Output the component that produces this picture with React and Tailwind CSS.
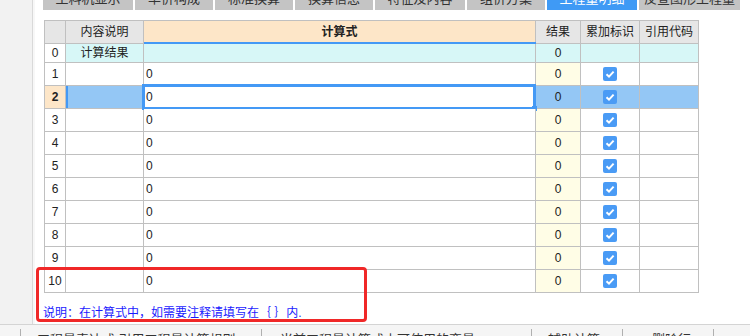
import React from 'react';

const FONT = "font-['Liberation_Sans','Noto_Sans_CJK_SC',sans-serif]";

const TABS = [
  { label: '工料机显示', w: 'w-[90px]' },
  { label: '单价构成', w: 'w-[78px]' },
  { label: '标准换算', w: 'w-[78px]' },
  { label: '换算信息', w: 'w-[78px]' },
  { label: '特征及内容', w: 'w-[90px]' },
  { label: '组价方案', w: 'w-[78px]' },
  { label: '工程量明细', w: 'w-[90px]', active: true },
  { label: '反查图形工程量', w: 'w-[101px]' },
];

const cell = 'border-r border-b border-[#c0c0c0] flex items-center shrink-0';

const Check = () => (
  <span className="w-[14px] h-[14px] rounded-[2px] bg-[#4a9bf5] flex items-center justify-center">
    <svg width="14" height="14" viewBox="0 0 14 14">
      <path d="M3.5 7.2 L6 9.6 L10.6 4.6" fill="none" stroke="#fff" strokeWidth="2" />
    </svg>
  </span>
);

const Row = ({ n }) => {
  const sel = n === 2;
  return (
    <div className="flex h-[23px]">
      <div className={`${cell} w-[21px] justify-center ${sel ? 'bg-[#fde6c8] font-bold' : 'bg-white'}`}>{n}</div>
      <div className={`${cell} w-[78px] ${sel ? 'bg-[#94c7f5] shadow-[inset_2px_0_0_#4499f5]' : 'bg-white'}`} />
      <div className={`${cell} w-[392px] pl-[2px] bg-white relative`}>
        0
        {sel && (
          <div className="absolute left-[-2px] top-[-2px] right-[-1px] bottom-[-2px] border-[3px] border-[#4499f5]">
            <div className="absolute right-[-4px] bottom-[-4px] w-[5px] h-[5px] bg-[#4499f5]" />
          </div>
        )}
      </div>
      <div className={`${cell} w-[45px] justify-center ${sel ? 'bg-[#94c7f5]' : 'bg-[#fffde6]'}`}>0</div>
      <div className={`${cell} w-[59px] justify-center ${sel ? 'bg-[#94c7f5]' : 'bg-white'}`}>
        <Check />
      </div>
      <div className={`${cell} w-[59px] ${sel ? 'bg-[#94c7f5]' : 'bg-white'}`} />
    </div>
  );
};

export default function App() {
  return (
    <div className={`w-[750px] h-[336px] overflow-hidden relative bg-white text-[12px] text-[#222] ${FONT}`}>
      <div className="flex h-[324px]">
        {/* left gutter */}
        <div className="w-[33px] bg-[#f2f2f2] border-r border-[#d9d9d9]" />
        <div className="w-[2px] bg-[#f7f7f7]" />

        <div className="flex-1 flex flex-col">
          {/* tabs, cut at top */}
          <div className="h-[10px] overflow-hidden relative">
            <div className="absolute bottom-0 left-[8px] flex gap-[2px]">
              {TABS.map(t => (
                <div
                  key={t.label}
                  className={`${t.w} h-[22px] flex items-center justify-center text-[13px] ${
                    t.active ? 'bg-[#3f9af5] text-white' : 'bg-[#c4c4c4] text-[#333]'
                  }`}
                >
                  {t.label}
                </div>
              ))}
            </div>
          </div>

          {/* grid */}
          <div className="ml-[9px] mt-[10px] w-[655px] border-t border-l border-[#c0c0c0]">
            <div className="flex h-[23px] bg-[#e6e6e6]">
              <div className={`${cell} w-[21px]`} />
              <div className={`${cell} w-[78px] justify-center`}>内容说明</div>
              <div className={`${cell} w-[392px] justify-center bg-[#fde6c8] font-bold relative`}>
                计算式
                <div className="absolute left-0 right-[-1px] bottom-[-1px] h-[2px] bg-[#4499f5]" />
              </div>
              <div className={`${cell} w-[45px] justify-center`}>结果</div>
              <div className={`${cell} w-[59px] justify-center`}>累加标识</div>
              <div className={`${cell} w-[59px] justify-center`}>引用代码</div>
            </div>
            <div className="flex h-[19px] bg-[#d7f7f7]">
              <div className={`${cell} w-[21px] justify-center bg-white`}>0</div>
              <div className={`${cell} w-[78px] justify-center`}>计算结果</div>
              <div className={`${cell} w-[392px]`} />
              <div className={`${cell} w-[45px] justify-center`}>0</div>
              <div className={`${cell} w-[59px]`} />
              <div className={`${cell} w-[59px]`} />
            </div>
            {[1, 2, 3, 4, 5, 6, 7, 8, 9, 10].map(n => (
              <Row key={n} n={n} />
            ))}
          </div>

          <div className="ml-[8px] mt-[11px] text-[#1a1aff]">说明：在计算式中，如需要注释请填写在｛ ｝内.</div>
        </div>
      </div>

      {/* bottom bar, cut */}
      <div className="h-[12px] border-t border-[#d4d4d4] bg-[#f5f5f5] flex text-[#333] text-[13px] leading-none">
        <div className="w-[21px] border-r border-[#b0b0b0] mt-[4px]" />
        <div className="w-[241px] border-r border-[#b0b0b0] mt-[4px] pl-[16px] pt-[4px] whitespace-nowrap overflow-hidden">工程量表达式 引用工程量计算规则</div>
        <div className="w-[270px] border-r border-[#b0b0b0] mt-[4px] pl-[18px] pt-[4px] whitespace-nowrap overflow-hidden">当前工程量计算式中可使用的变量</div>
        <div className="w-[91px] border-r border-[#b0b0b0] mt-[4px] pl-[16px] pt-[4px] whitespace-nowrap overflow-hidden">辅助计算</div>
        <div className="w-[91px] border-r border-[#b0b0b0] mt-[4px] pl-[29px] pt-[4px] whitespace-nowrap overflow-hidden">删除行</div>
      </div>

      {/* red annotation box */}
      <div className="absolute left-[36px] top-[267px] w-[331px] h-[55px] border-[3px] border-[#f02828] rounded-[4px]" />
    </div>
  );
}
